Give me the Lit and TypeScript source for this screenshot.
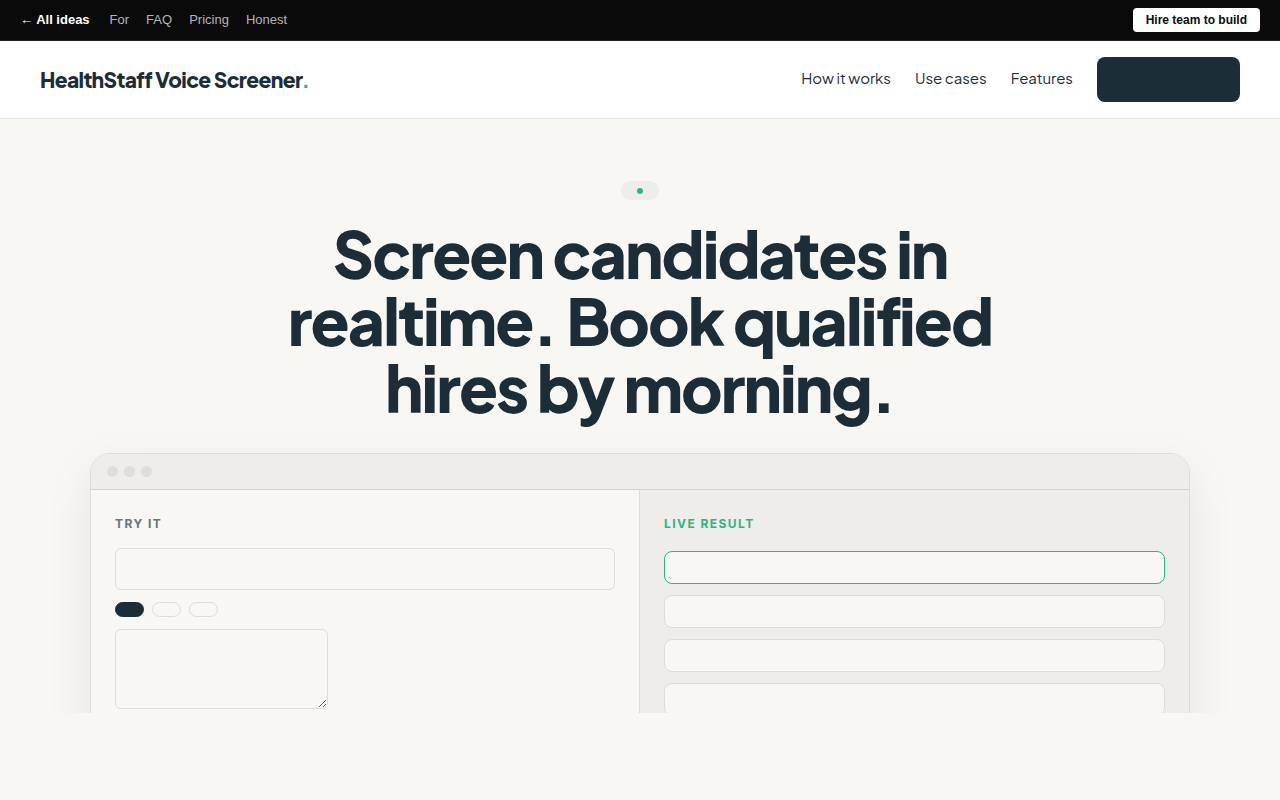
import { LitElement, html, css } from "lit";
import { customElement, state } from "lit/decorators.js";
import { classMap } from "lit/directives/class-map.js";

@customElement("idea-bar")
class IdeaBar extends LitElement {
  static styles = css`
    .bar {
      display: flex;
      align-items: center;
      justify-content: space-between;
      padding: 8px 20px;
      background: #0a0a0a;
      border-bottom: 1px solid #222222;
      font: 13px/24px "Liberation Sans", Arial, sans-serif;
    }
    .links { display: flex; gap: 17px; }
    a { color: #b4b4b4; text-decoration: none; }
    .back { color: #ffffff; font-weight: 700; margin-right: 3px; }
    .hire {
      border: 0;
      border-radius: 4px;
      padding: 0 13px;
      background: #ffffff;
      color: #0a0a0a;
      font: 700 12px/24px "Liberation Sans", Arial, sans-serif;
    }
  `;
  render() {
    return html`<div class="bar">
      <nav class="links" aria-label="Ideas">
        <a class="back" href="#ideas">← All ideas</a>
        <a href="#for">For</a>
        <a href="#faq">FAQ</a>
        <a href="#pricing">Pricing</a>
        <a href="#honest">Honest</a>
      </nav>
      <button class="hire">Hire team to build</button>
    </div>`;
  }
}

@customElement("site-header")
class SiteHeader extends LitElement {
  static styles = css`
    .header {
      display: flex;
      align-items: center;
      justify-content: space-between;
      padding: 16px 40px;
      background: #ffffff;
      border-bottom: 1px solid #e2e2e3;
      font-family: "Plus Jakarta Sans", Inter, sans-serif;
    }
    a { color: #1c2d38; text-decoration: none; }
    .brand { font-size: 21px; line-height: 28px; font-weight: 800; letter-spacing: -0.03em; }
    .brand .stop { color: #2bb585; }
    .links { display: flex; gap: 24px; font-size: 15px; line-height: 42px; }
    .cta {
      width: 143px;
      height: 45px;
      border: 0;
      border-radius: 8px;
      background: #1c2d38;
    }
  `;
  render() {
    return html`<header class="header">
      <a class="brand" href="#top">HealthStaff Voice Screener<span class="stop">.</span></a>
      <nav class="links" aria-label="Main">
        <a href="#how">How it works</a>
        <a href="#cases">Use cases</a>
        <a href="#features">Features</a>
        <button class="cta" aria-label="Get started"></button>
      </nav>
    </header>`;
  }
}

@customElement("demo-window")
class DemoWindow extends LitElement {
  @state() private active = 0;

  static styles = css`
    :host { display: block; }
    .window {
      box-sizing: border-box;
      overflow: hidden;
      background: #f8f7f3;
      border: 1px solid #dddcd9;
      border-radius: 20px;
      box-shadow: 0 16px 48px rgba(0, 0, 0, 0.08);
      font-family: Inter, sans-serif;
    }
    .titlebar {
      display: flex;
      gap: 6px;
      padding: 12px 16px;
      background: #eeede9;
      border-bottom: 1px solid #d3d3d0;
    }
    .dot { width: 11px; height: 11px; border-radius: 50%; background: #dddddd; }
    .panes { display: grid; grid-template-columns: 1fr 1fr; }
    .pane { padding: 24px; }
    .try { border-right: 1px solid #dddcd9; }
    .result { background: #eeede9; }
    .label {
      display: block;
      margin: 0;
      font-size: 12px;
      line-height: 20px;
      font-weight: 700;
      letter-spacing: 0.12em;
      color: #6b7280;
    }
    .live { color: #2bb585; }
    .field, .notes {
      display: block;
      box-sizing: border-box;
      border: 1px solid #dddcd9;
      border-radius: 6px;
      background: #f8f7f3;
      color: #1c2d38;
      font: 14px/20px Inter, sans-serif;
      padding: 10px 12px;
    }
    .field { width: 100%; height: 42px; margin-top: 14px; }
    .notes { width: 213px; height: 80px; }
    .chips { display: flex; gap: 8px; margin: 12px 0; }
    .chip {
      box-sizing: border-box;
      width: 29px;
      height: 15px;
      padding: 0;
      border: 1px solid #dddcd9;
      border-radius: 8px;
      background: #f8f7f3;
    }
    .on { background: #1c2d38; border-color: #1c2d38; }
    .rows { display: grid; gap: 11px; margin: 17px 0 0; padding: 0; list-style: none; }
    .row {
      box-sizing: border-box;
      height: 33px;
      border: 1px solid #dddcd9;
      border-radius: 8px;
      background: #f8f7f3;
    }
    .current { border-color: #2bb585; }
  `;
  render() {
    return html`<div class="window">
      <div class="titlebar"><span class="dot"></span><span class="dot"></span><span class="dot"></span></div>
      <div class="panes">
        <div class="pane try">
          <label class="label" for="query">TRY IT</label>
          <input class="field" id="query" type="text" />
          <div class="chips">
            ${[0, 1, 2].map(
              (i) => html`<button
                class=${classMap({ chip: true, on: i === this.active })}
                aria-label="Example ${i + 1}"
                @click=${() => (this.active = i)}
              ></button>`
            )}
          </div>
          <textarea class="notes" aria-label="Notes"></textarea>
        </div>
        <div class="pane result">
          <h2 class="label live">LIVE RESULT</h2>
          <ul class="rows">
            ${[0, 1, 2, 3].map((i) => html`<li class=${classMap({ row: true, current: i === 0 })}></li>`)}
          </ul>
        </div>
      </div>
    </div>`;
  }
}

@customElement("app-root")
class AppRoot extends LitElement {
  static styles = css`
    :host { display: block; min-height: 100vh; background: #f8f7f3; }
    .hero {
      display: flex;
      flex-direction: column;
      align-items: center;
      overflow: hidden;
      padding: 62px 40px 0;
    }
    .badge {
      display: flex;
      align-items: center;
      justify-content: center;
      width: 38px;
      height: 19px;
      border-radius: 10px;
      background: #eeede9;
    }
    .pulse { width: 6px; height: 6px; border-radius: 50%; background: #2bb585; }
    .title {
      max-width: 800px;
      margin: 20px 0 32px;
      color: #1c2d38;
      font: 800 64px/67px "Plus Jakarta Sans", Inter, sans-serif;
      letter-spacing: -0.03em;
      text-align: center;
    }
    .preview { width: 100%; max-width: 1100px; height: 260px; }
  `;
  render() {
    return html`
      <idea-bar></idea-bar>
      <site-header></site-header>
      <main class="hero">
        <div class="badge"><span class="pulse"></span></div>
        <h1 class="title">Screen candidates in<br />realtime. Book qualified<br />hires by morning.</h1>
        <div class="preview"><demo-window></demo-window></div>
      </main>
    `;
  }
}
